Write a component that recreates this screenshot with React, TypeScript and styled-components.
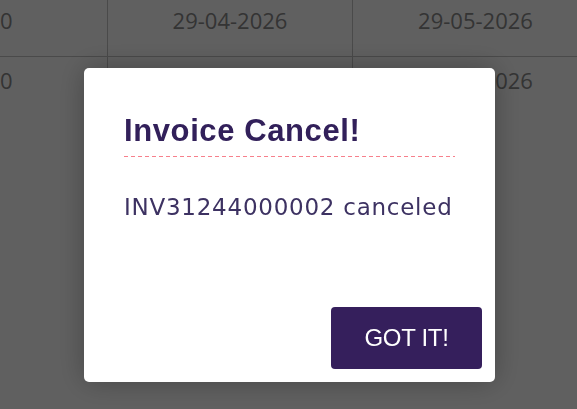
import React from 'react'
import styled, { createGlobalStyle } from 'styled-components'

const GlobalStyle = createGlobalStyle`
  html, body {
    margin: 0;
    padding: 0;
    background: #ffffff;
    overflow: hidden;
  }
  * {
    box-sizing: border-box;
  }
`

const Page = styled.div`
  width: 577px;
  height: 409px;
  overflow: hidden;
  background: #ffffff;
`

const Table = styled.div`
  margin-top: -3px;
  width: 598px;
`

const Row = styled.div<{ $last?: boolean }>`
  display: grid;
  grid-template-columns: 107px 245px 246px;
  height: 60px;
  border-bottom: 1px solid ${({ $last }) => ($last ? 'transparent' : '#c4c4c4')};
`

const Cell = styled.div<{ $align?: 'left' | 'center' }>`
  padding-top: 8px;
  border-left: 1px solid #c4c4c4;
  font-family: 'Open Sans', 'Noto Sans', sans-serif;
  font-size: 22px;
  line-height: 30px;
  color: #8b8b8b;
  text-align: ${({ $align }) => $align ?? 'center'};
  white-space: nowrap;
  overflow: hidden;

  &:first-child {
    border-left: none;
  }
`

const Backdrop = styled.div`
  position: fixed;
  inset: 0;
  background: rgba(0, 0, 0, 0.625);
  display: flex;
  justify-content: center;
  align-items: flex-start;
  padding-top: 68px;
  padding-left: 2px;
`

const Modal = styled.div`
  width: 411px;
  height: 314px;
  background: #ffffff;
  border-radius: 5px;
  box-shadow: 0 0 28px rgba(0, 0, 0, 0.28);
  display: flex;
  flex-direction: column;
`

const Body = styled.div`
  padding: 46px 40px 0 40px;
`

const Title = styled.h2`
  margin: 0;
  padding-bottom: 10px;
  font-family: 'Liberation Sans', Arial, sans-serif;
  font-weight: 700;
  font-size: 31px;
  line-height: 33px;
  letter-spacing: 0.6px;
  color: #32205a;
  background-image: repeating-linear-gradient(
    to right,
    #f7808c 0 4px,
    transparent 4px 7px
  );
  background-size: 100% 1px;
  background-position: left bottom;
  background-repeat: no-repeat;
`

const Message = styled.p`
  margin: 35px 0 0 0;
  font-family: 'DejaVu Sans', Verdana, sans-serif;
  font-size: 23px;
  line-height: 30px;
  letter-spacing: 0.75px;
  color: #3d3262;
`

const Footer = styled.div`
  margin-top: auto;
  display: flex;
  justify-content: flex-end;
  padding: 0 13px 13px 0;
`

const Button = styled.button`
  width: 151px;
  height: 62px;
  border: none;
  border-radius: 4px;
  background: #351f5c;
  color: #ffffff;
  font-family: 'Liberation Sans', Arial, sans-serif;
  font-size: 24px;
  letter-spacing: -0.3px;
  cursor: pointer;
`

export default function App() {
  return (
    <>
      <GlobalStyle />
      <Page>
        <Table>
          <Row>
            <Cell $align="left">0</Cell>
            <Cell>29-04-2026</Cell>
            <Cell>29-05-2026</Cell>
          </Row>
          <Row $last>
            <Cell $align="left">0</Cell>
            <Cell>29-04-2026</Cell>
            <Cell>29-05-2026</Cell>
          </Row>
        </Table>
      </Page>
      <Backdrop>
        <Modal role="dialog" aria-modal="true">
          <Body>
            <Title>Invoice Cancel!</Title>
            <Message>INV31244000002 canceled</Message>
          </Body>
          <Footer>
            <Button>GOT IT!</Button>
          </Footer>
        </Modal>
      </Backdrop>
    </>
  )
}
